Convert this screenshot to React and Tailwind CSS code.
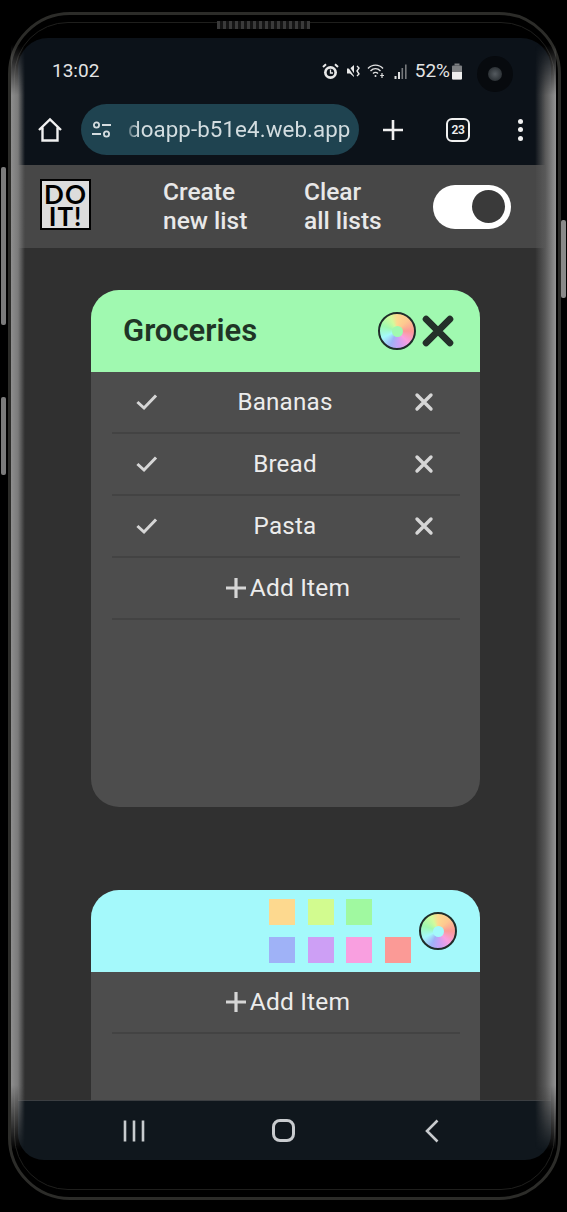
import React from "react";

function Wheel({ hole }) {
  return (
    <div className="flex h-[38px] w-[38px] shrink-0 items-center justify-center rounded-full border-2 border-[#1f2d2a] bg-[conic-gradient(#fdd98f_0deg,#fdc890_45deg,#fb9a96_90deg,#f99fe0_135deg,#cd9ff5_170deg,#9fb2f7_205deg,#a4f9fb_245deg,#a0f9b0_290deg,#d2fb9d_335deg,#fdd98f_360deg)]">
      <div className={`h-[11px] w-[11px] rounded-full blur-[0.5px] ${hole}`} />
    </div>
  );
}

function Check() {
  return (
    <svg width="24" height="24" viewBox="0 0 24 24" fill="none" stroke="#d6d6d6" strokeWidth="3" strokeLinecap="square">
      <path d="M3.5 13 L9 18 L20 6.5" />
    </svg>
  );
}

function Cross({ size = 20, w = 3, color = "#d6d6d6" }) {
  return (
    <svg width={size} height={size} viewBox="0 0 20 20" fill="none" stroke={color} strokeWidth={w} strokeLinecap="round">
      <path d="M3 3 L17 17 M17 3 L3 17" />
    </svg>
  );
}

function Row({ label }) {
  return (
    <div className="ml-[21px] mr-[20px] grid h-[62px] grid-cols-[70px_1fr_72px] items-center border-b-2 border-[#434343]">
      <div className="flex justify-center"><Check /></div>
      <div className="text-center text-[24.2px] tracking-[0.2px] text-[#ececec]">{label}</div>
      <div className="flex justify-center"><Cross size={20} w={3.4} /></div>
    </div>
  );
}

function AddItem() {
  return (
    <div className="ml-[21px] mr-[20px] flex h-[62px] items-center justify-center gap-[3px] border-b-2 border-[#434343] pl-[3px] text-[24.5px] tracking-[0.2px] text-[#ececec]">
      <svg width="22" height="22" viewBox="0 0 22 22" stroke="#d6d6d6" strokeWidth="3.2">
        <path d="M11 1 V21 M1 11 H21" />
      </svg>
      <span>Add Item</span>
    </div>
  );
}

function Swatch({ color }) {
  return <div className={`h-[26px] w-[26px] ${color}`} />;
}

export default function App() {
  return (
    <div className="relative h-[1212px] w-[567px] overflow-hidden bg-black pb-[52px] pl-[18px] pr-[16px] pt-[38px] font-['Roboto',sans-serif]">
      <div className="flex h-full flex-col overflow-hidden rounded-t-[30px] rounded-b-[26px]">
        {/* Status + browser bar */}
        <div className="h-[127px] shrink-0 bg-[#0c1219]">
          <div className="flex h-[66px] items-center justify-between pl-[34px] pr-[88px] text-[19px] text-[#e4e4e4]">
            <span className="leading-[22px]">13:02</span>
            <div className="flex items-center">
              <svg width="17" height="17" viewBox="0 0 17 17" className="mr-[7px]">
                <circle cx="8.5" cy="9.5" r="6.5" fill="#e8e8e8" />
                <circle cx="8.5" cy="9.5" r="3.8" fill="#0c1219" />
                <path d="M8.5 6.5 V10 H11" stroke="#e8e8e8" strokeWidth="1.3" fill="none" />
                <path d="M1 4 L4 1.2 M16 4 L13 1.2" stroke="#e8e8e8" strokeWidth="2" />
              </svg>
              <svg width="15" height="16" viewBox="0 0 15 16" className="mr-[6px]">
                <path d="M1 5.5 H4 L8 2 V14 L4 10.5 H1 Z" fill="#e8e8e8" />
                <path d="M1 1.5 L10 14.5" stroke="#0c1219" strokeWidth="1.4" />
                <path d="M11 3 L13 5 L11 8 L13 11 L11 13" stroke="#e8e8e8" strokeWidth="1.4" fill="none" />
              </svg>
              <svg width="20" height="16" viewBox="0 0 20 16" className="mr-[7px]" fill="none" stroke="#e0e0e0" strokeWidth="1.4">
                <path d="M1 5.5 C5 1 12 1 16 5.5" />
                <path d="M3.5 8 C6.5 5 10.5 5 13.5 8" />
                <path d="M6 10.5 C7.5 9 9.5 9 11 10.5" />
                <circle cx="8.5" cy="13" r="1" fill="#e0e0e0" stroke="none" />
                <path d="M15 10 V15 M13.2 12.5 H17" strokeWidth="1.2" />
              </svg>
              <svg width="14" height="15" viewBox="0 0 14 15" className="mr-[7px]">
                <rect x="0.5" y="12" width="2" height="3" fill="#e0e0e0" />
                <rect x="4" y="8" width="2" height="7" fill="#e0e0e0" />
                <rect x="7.5" y="4" width="1.6" height="11" fill="#77797c" />
                <rect x="11" y="0.5" width="1.6" height="14.5" fill="#77797c" />
              </svg>
              <span className="leading-[22px]">52%</span>
              <svg width="12" height="17" viewBox="0 0 12 17" className="ml-[1px]">
                <rect x="3.5" y="0.5" width="5" height="2" fill="#7d7f82" />
                <rect x="1" y="2.5" width="10" height="14" rx="1" fill="#7d7f82" />
                <path d="M1 9 H11 V15.5 A1 1 0 0 1 10 16.5 H2 A1 1 0 0 1 1 15.5 Z" fill="#eeeeee" />
              </svg>
            </div>
          </div>
          <div className="flex h-[51px] items-center">
            <div className="flex w-[63px] justify-center pl-[1px]">
              <svg width="26" height="26" viewBox="0 0 26 26" fill="none" stroke="#f0f0f0" strokeWidth="2.4" strokeLinejoin="miter">
                <path d="M2 13 L13 2.5 L24 13 M5.5 10.5 V23.5 H20.5 V10.5" />
              </svg>
            </div>
            <div className="flex h-[51px] w-[278px] items-center overflow-hidden rounded-full bg-[#1f4350] pl-[10px]">
              <svg width="22" height="20" viewBox="0 0 22 20" fill="none" stroke="#d4dcdf" strokeWidth="1.8" className="shrink-0">
                <circle cx="5.5" cy="5" r="2.6" />
                <path d="M11 5 H20" />
                <circle cx="15.5" cy="14" r="2.6" />
                <path d="M1 14 H10" />
              </svg>
              <div className="ml-[14px] whitespace-nowrap pl-[1px] text-[22.3px] tracking-[0.1px] text-[#d3dde0] [mask-image:linear-gradient(to_right,rgba(0,0,0,0.25),black_12px)]">doapp-b51e4.web.app</div>
            </div>
            <div className="flex w-[68px] justify-center">
              <svg width="22" height="22" viewBox="0 0 22 22" stroke="#f0f0f0" strokeWidth="2.6">
                <path d="M11 1 V21 M1 11 H21" />
              </svg>
            </div>
            <div className="ml-[19px] flex h-[24px] w-[24px] items-center justify-center rounded-[6px] border-2 border-[#f0f0f0] text-[12px] font-semibold tracking-[-0.3px] text-[#f0f0f0]">23</div>
            <div className="ml-[48px] flex flex-col gap-[3.5px]">
              <div className="h-[5px] w-[5px] rounded-full bg-[#f0f0f0]" />
              <div className="h-[5px] w-[5px] rounded-full bg-[#f0f0f0]" />
              <div className="h-[5px] w-[5px] rounded-full bg-[#f0f0f0]" />
            </div>
          </div>
        </div>

        {/* App bar */}
        <div className="flex h-[83px] shrink-0 items-center bg-[#474747] pl-[22px]">
          <div className="mb-[4px] flex h-[51px] w-[51px] shrink-0 flex-col items-center justify-center border-2 border-black bg-[#dcdcdc] font-['Lato',sans-serif] text-[26px] font-bold leading-[22px] tracking-[1px] text-black">
            <span>DO</span>
            <span>IT!</span>
          </div>
          <div className="mb-[2px] ml-[72px] w-[141px] text-[24.5px] font-medium leading-[29px] text-[#e8e8e8]">Create<br />new list</div>
          <div className="mb-[2px] w-[129px] text-[24.5px] font-medium leading-[29px] text-[#e8e8e8]">Clear<br />all lists</div>
          <div className="flex h-[44px] w-[78px] items-center justify-end rounded-full bg-white pr-[6px]">
            <div className="h-[33px] w-[33px] rounded-full bg-[#3a3a3a]" />
          </div>
        </div>

        {/* Lists */}
        <div className="flex min-h-0 flex-1 flex-col gap-[83px] overflow-hidden bg-[#303030] pl-[73px] pr-[71px] pt-[42px]">
          <div className="flex h-[517px] shrink-0 flex-col overflow-hidden rounded-[28px] bg-[#4d4d4d]">
            <div className="flex h-[82px] shrink-0 items-center bg-[#a0f9b0] pl-[32px] pr-[25px]">
              <span className="flex-1 text-[31px] font-semibold text-[#1f3526]">Groceries</span>
              <Wheel hole="bg-[#a0f9b0]" />
              <div className="ml-[5px]"><Cross size={34} w={4} color="#24302a" /></div>
            </div>
            <Row label="Bananas" />
            <Row label="Bread" />
            <Row label="Pasta" />
            <AddItem />
          </div>

          <div className="flex h-[517px] shrink-0 flex-col overflow-hidden rounded-[28px] bg-[#4d4d4d]">
            <div className="flex h-[82px] shrink-0 items-center justify-end bg-[#a4f9fb] pr-[23px]">
              <div className="grid grid-cols-[26px_26px_26px_26px] gap-x-[12.67px] gap-y-[12px]">
                <Swatch color="bg-[#fdd98f]" />
                <Swatch color="bg-[#d2fb8f]" />
                <Swatch color="bg-[#a0f9a0]" />
                <div />
                <Swatch color="bg-[#9fb2f7]" />
                <Swatch color="bg-[#cd9ff5]" />
                <Swatch color="bg-[#f99fe0]" />
                <Swatch color="bg-[#fb9a96]" />
              </div>
              <div className="ml-[8px]"><Wheel hole="bg-[#a4f9fb]" /></div>
            </div>
            <AddItem />
          </div>
        </div>

        {/* Android nav */}
        <div className="grid h-[60px] shrink-0 grid-cols-[149px_149px_149px] items-center justify-center border-t border-[#3c3f42] bg-[#10171d] pr-[3px]">
          <div className="flex justify-center">
            <svg width="24" height="24" viewBox="0 0 24 24" stroke="#c8cbce" strokeWidth="2.6">
              <path d="M3 1.5 V22.5 M12 1.5 V22.5 M21 1.5 V22.5" />
            </svg>
          </div>
          <div className="flex justify-center">
            <div className="h-[23px] w-[23px] rounded-[8px] border-[3px] border-[#c8cbce]" />
          </div>
          <div className="flex justify-center">
            <svg width="16" height="24" viewBox="0 0 16 24" fill="none" stroke="#c8cbce" strokeWidth="2.6">
              <path d="M13.5 1.5 L3 12 L13.5 22.5" />
            </svg>
          </div>
        </div>
      </div>

      {/* Device chrome overlays */}
      <div className="pointer-events-none absolute left-[8px] top-[12px] h-[1188px] w-[553px] rounded-[62px] border-[3px] border-[#2c2c29]" />
      <div className="pointer-events-none absolute left-[14px] top-[22px] h-[1168px] w-[541px] rounded-[54px] border-[1px] border-[#1f1f1d]" />
      <div className="absolute left-[217px] top-[21px] h-[8px] w-[93px] bg-[repeating-linear-gradient(90deg,#3a3a3a_0px,#3a3a3a_3px,#141414_3px,#141414_6px)]" />
      <div className="absolute left-[11px] top-[45px] h-[1105px] w-[14px] bg-gradient-to-r from-[#8e8e8e] via-[#7a7a7a] to-transparent [mask-image:linear-gradient(to_bottom,transparent,black_50px,black_1040px,transparent)]" />
      <div className="absolute left-[535px] top-[45px] h-[1105px] w-[21px] bg-gradient-to-l from-[#949494] via-[#5a5a5a] to-transparent [mask-image:linear-gradient(to_bottom,transparent,black_50px,black_1040px,transparent)]" />
      <div className="absolute left-[1px] top-[167px] h-[158px] w-[5px] rounded-[2px] bg-[#7b7b7b]" />
      <div className="absolute left-[1px] top-[397px] h-[78px] w-[5px] rounded-[2px] bg-[#7b7b7b]" />
      <div className="absolute left-[561px] top-[220px] h-[78px] w-[5px] rounded-[2px] bg-[#8a8a8a]" />
      <div className="absolute left-[477px] top-[56px] flex h-[36px] w-[36px] items-center justify-center rounded-full bg-[#070a0e]">
        <div className="h-[14px] w-[14px] rounded-full bg-[radial-gradient(circle,#555b60,#1c2125)]" />
      </div>
    </div>
  );
}
